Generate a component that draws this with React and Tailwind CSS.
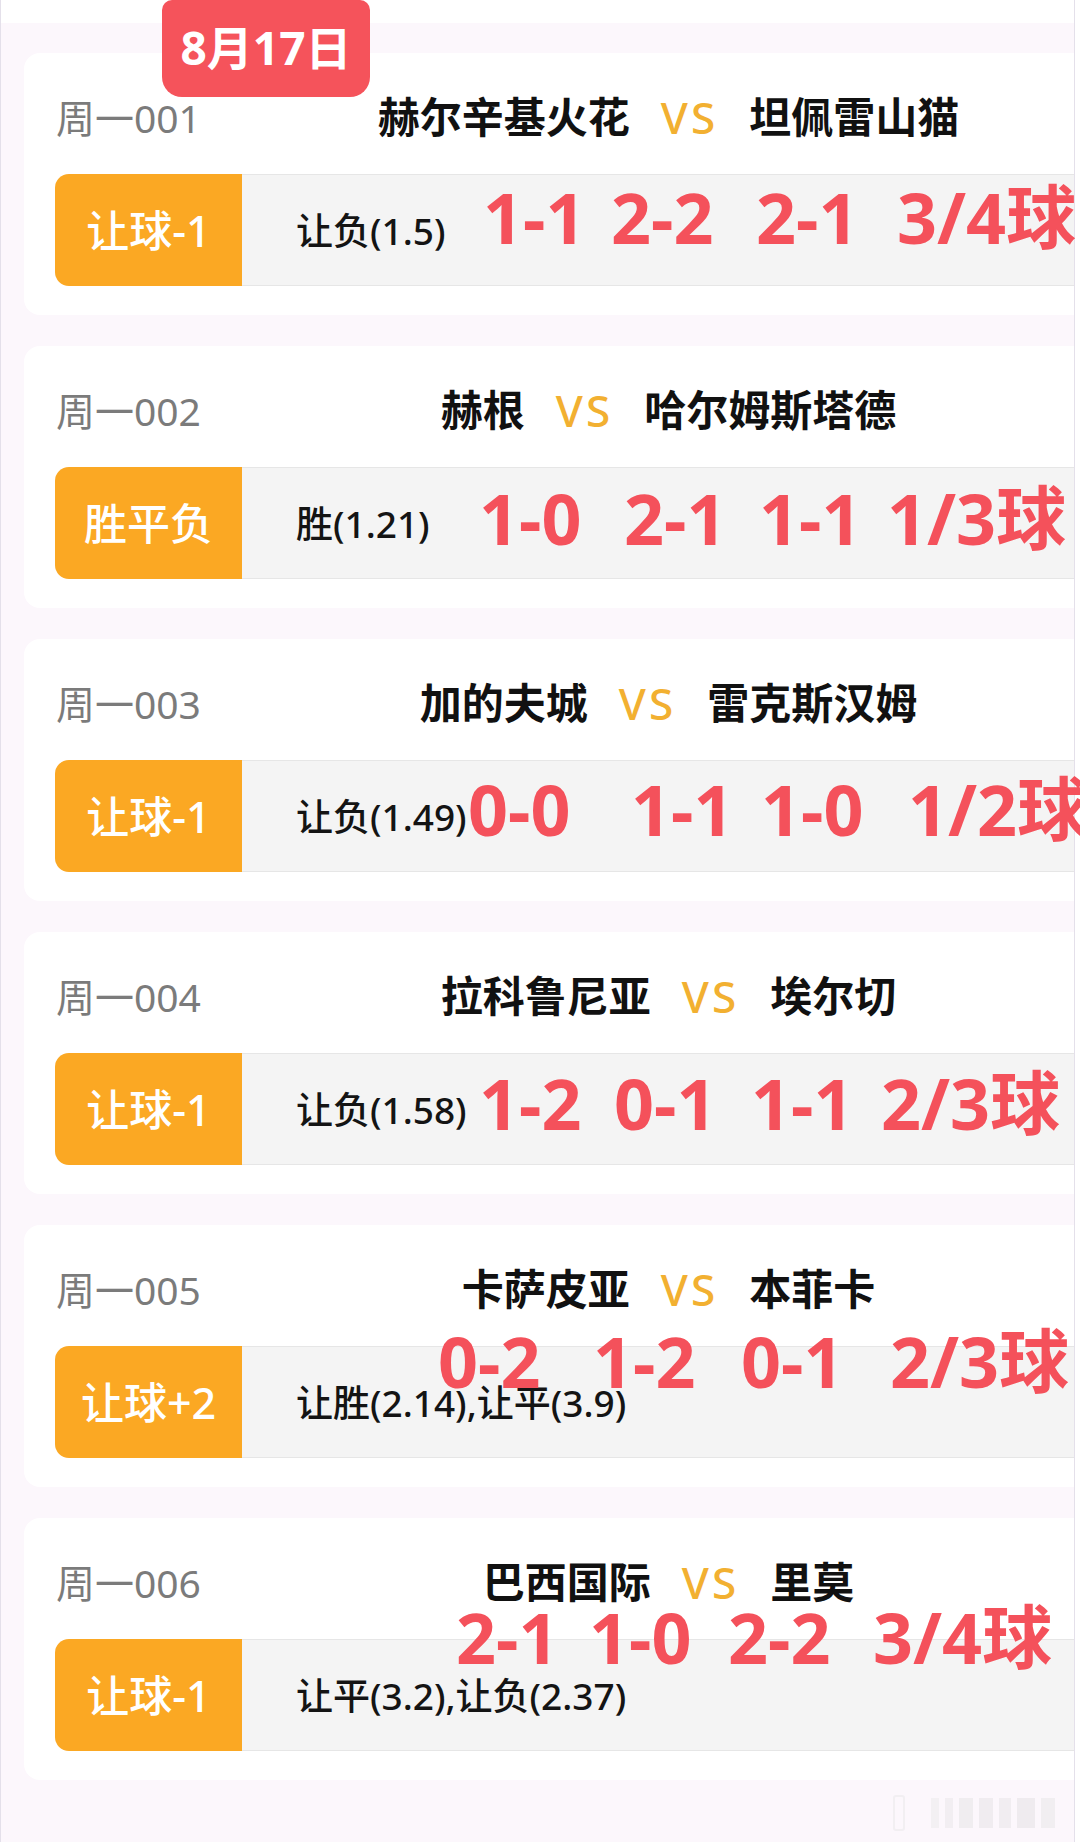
import React from "react";

const matches = [
  {
    code: "周一001",
    home: "赫尔辛基火花",
    away: "坦佩雷山猫",
    tag: "让球-1",
    odds: "让负(1.5)",
    top: "top-[129px]",
    scores: [
      ["1-1", "left-[459px]"],
      ["2-2", "left-[587px]"],
      ["2-1", "left-[732px]"],
      ["3/4球", "left-[873px]"],
    ],
  },
  {
    code: "周一002",
    home: "赫根",
    away: "哈尔姆斯塔德",
    tag: "胜平负",
    odds: "胜(1.21)",
    top: "top-[137px]",
    scores: [
      ["1-0", "left-[455px]"],
      ["2-1", "left-[600px]"],
      ["1-1", "left-[735px]"],
      ["1/3球", "left-[863px]"],
    ],
  },
  {
    code: "周一003",
    home: "加的夫城",
    away: "雷克斯汉姆",
    tag: "让球-1",
    odds: "让负(1.49)",
    top: "top-[135px]",
    scores: [
      ["0-0", "left-[444px]"],
      ["1-1", "left-[607px]"],
      ["1-0", "left-[737px]"],
      ["1/2球", "left-[884px]"],
    ],
  },
  {
    code: "周一004",
    home: "拉科鲁尼亚",
    away: "埃尔切",
    tag: "让球-1",
    odds: "让负(1.58)",
    top: "top-[136px]",
    scores: [
      ["1-2", "left-[455px]"],
      ["0-1", "left-[590px]"],
      ["1-1", "left-[727px]"],
      ["2/3球", "left-[857px]"],
    ],
  },
  {
    code: "周一005",
    home: "卡萨皮亚",
    away: "本菲卡",
    tag: "让球+2",
    odds: "让胜(2.14),让平(3.9)",
    top: "top-[101px]",
    scores: [
      ["0-2", "left-[414px]"],
      ["1-2", "left-[569px]"],
      ["0-1", "left-[717px]"],
      ["2/3球", "left-[866px]"],
    ],
  },
  {
    code: "周一006",
    home: "巴西国际",
    away: "里莫",
    tag: "让球-1",
    odds: "让平(3.2),让负(2.37)",
    top: "top-[84px]",
    scores: [
      ["2-1", "left-[432px]"],
      ["1-0", "left-[565px]"],
      ["2-2", "left-[704px]"],
      ["3/4球", "left-[849px]"],
    ],
  },
];

function Card({ m }) {
  return (
    <div className="relative h-[262px] bg-white rounded-l-[16px] pt-[42px] flex flex-col">
      <div className="h-[44px] flex items-center pl-[32px]">
        <div className="w-[207px] text-[39px] leading-none text-[#7b7b7b]">{m.code}</div>
        <div className="flex-1 flex items-center justify-center">
          <span className="text-[42px] leading-none font-bold text-[#111111]">{m.home}</span>
          <span className="mx-[31px] text-[44px] leading-none font-medium tracking-[3px] text-[#f2b031]">VS</span>
          <span className="text-[42px] leading-none font-bold text-[#111111]">{m.away}</span>
        </div>
      </div>
      <div className="mt-[35px] ml-[31px] h-[112px] flex">
        <div className="w-[187px] h-full rounded-l-[14px] bg-[#fba823] flex items-center justify-center text-[43px] leading-none font-medium text-white">
          {m.tag}
        </div>
        <div className="flex-1 h-full bg-[#f4f4f4] border-y border-[#e6e6e6] flex items-center pl-[54px] text-[37px] leading-none font-medium text-[#141414]">
          {m.odds}
        </div>
      </div>
      <div className={`absolute inset-x-0 ${m.top}`}>
        {m.scores.map(([s, left]) => (
          <span
            key={s + left}
            className={`absolute top-0 ${left} whitespace-nowrap text-[70px] leading-none font-bold text-[#f4515b]`}
          >
            {s}
          </span>
        ))}
      </div>
    </div>
  );
}

export default function App() {
  return (
    <div
      className="w-[1080px] h-[1842px] bg-white overflow-hidden"
      style={{ fontFamily: '"Noto Sans", "Noto Sans CJK SC", sans-serif' }}
    >
      <div className="relative w-[1075px] h-full border-l border-r border-[#e4e0ea] flex flex-col">
        <div className="h-[23px] bg-white" />
        <div className="flex-1 bg-[#fcf7fc] pt-[30px] pl-[23px] flex flex-col gap-[31px]">
          {matches.map((m) => (
            <Card key={m.code} m={m} />
          ))}
        </div>
        <div className="absolute left-[161px] top-0 w-[208px] h-[97px] rounded-t-[10px] rounded-b-[20px] bg-[#f5535b] flex items-center justify-center pb-[4px]">
          <span className="text-[46px] leading-none font-bold text-white">8月17日</span>
        </div>
        <div className="absolute left-[892px] top-[1793px] w-[176px] h-[40px] flex items-center gap-[6px] opacity-25">
          <div className="w-[12px] h-[36px] rounded-[3px] border-2 border-[#d8d8d8]" />
          <div className="w-[8px] h-[30px] bg-[#dcdcdc] ml-[20px]" />
          <div className="w-[8px] h-[30px] bg-[#d6d6d6]" />
          <div className="w-[14px] h-[30px] bg-[#d0d0d0]" />
          <div className="w-[14px] h-[30px] bg-[#cfcfcf]" />
          <div className="w-[12px] h-[30px] bg-[#d2d2d2]" />
          <div className="w-[18px] h-[30px] bg-[#cacaca]" />
          <div className="w-[14px] h-[30px] bg-[#d4d4d4]" />
        </div>
      </div>
    </div>
  );
}
